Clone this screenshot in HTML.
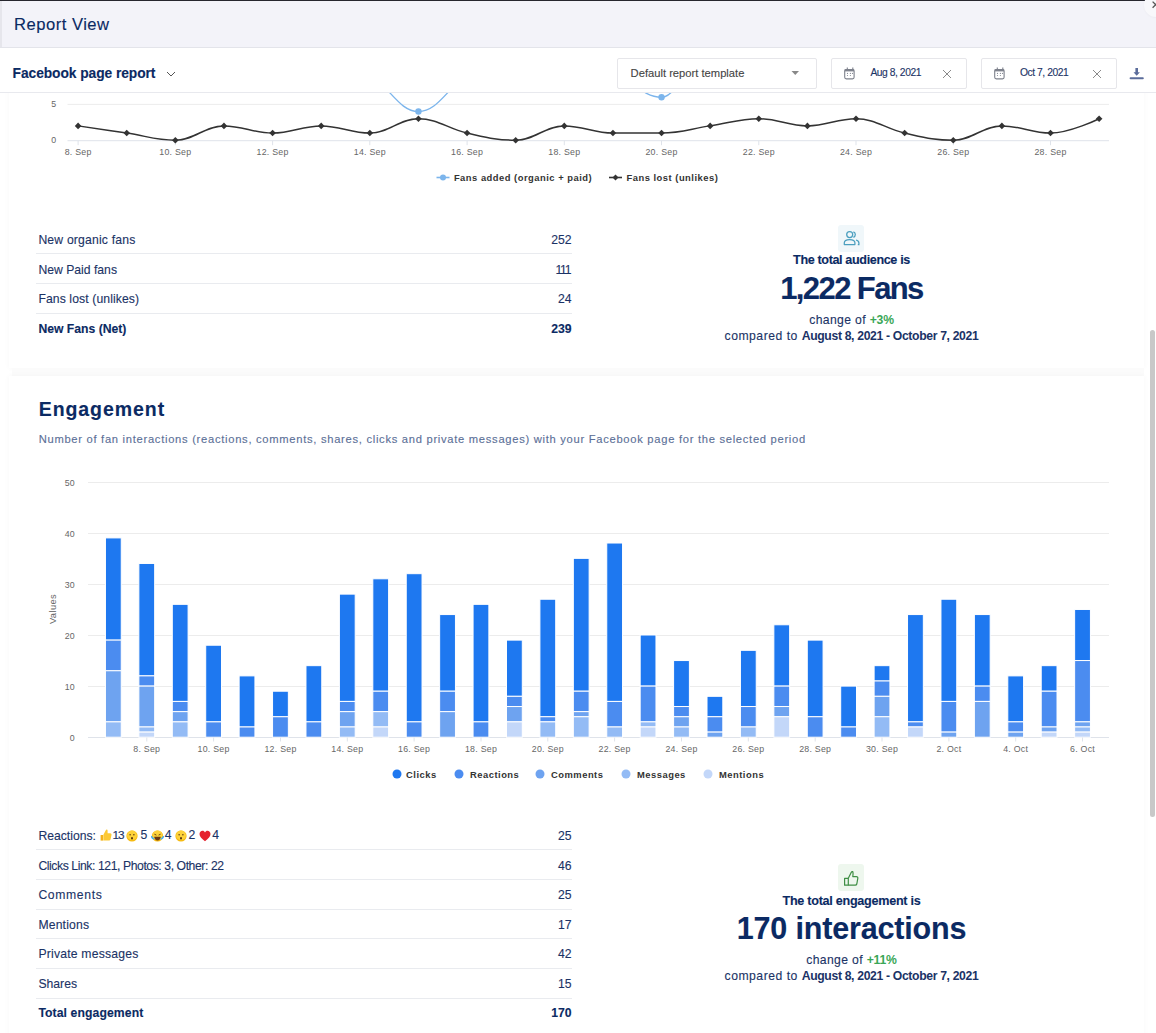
<!DOCTYPE html>
<html><head><meta charset="utf-8">
<style>
html,body{margin:0;padding:0;}
body{width:1156px;height:1033px;overflow:hidden;background:#fff;position:relative;font-family:"Liberation Sans",sans-serif;}
.abs{position:absolute;}
.t{position:absolute;white-space:nowrap;line-height:1;-webkit-text-stroke:0.12px currentColor;}
.t b{-webkit-text-stroke:0;}
svg text{font-family:"Liberation Sans",sans-serif;}
.ax{font-size:8.8px;fill:#666;letter-spacing:0.25px;}
.lg{font-size:9.4px;font-weight:bold;fill:#333;letter-spacing:0.5px;}
.card{position:absolute;background:#fff;box-shadow:0 0 6px rgba(0,0,0,0.035);}
.row{position:absolute;left:36px;width:536px;height:1px;background:#e9ebef;}
</style></head>
<body>
<div class="card" style="left:9px;top:60px;width:1135px;height:308px;"></div>
<div class="abs" style="left:12px;top:368px;width:1132px;height:8px;background:#fbfbfb;"></div>
<div class="card" style="left:9px;top:376px;width:1135px;height:700px;"></div>
<svg class="abs" style="left:0;top:0" width="1156" height="200" viewBox="0 0 1156 200">
<line x1="67.5" x2="1109" y1="104.4" y2="104.4" stroke="#ececec" stroke-width="1"/>
<line x1="67.5" x2="1109" y1="68.6" y2="68.6" stroke="#ececec" stroke-width="1"/>
<line x1="67.5" x2="1109" y1="32.8" y2="32.8" stroke="#ececec" stroke-width="1"/>
<line x1="67.5" x2="1109" y1="140.7" y2="140.7" stroke="#dfe3ea" stroke-width="1"/>
<line x1="78.1" x2="78.1" y1="140.7" y2="145.2" stroke="#dfe3ea"/>
<text x="78.1" y="155.2" text-anchor="middle" class="ax">8. Sep</text>
<line x1="175.3" x2="175.3" y1="140.7" y2="145.2" stroke="#dfe3ea"/>
<text x="175.3" y="155.2" text-anchor="middle" class="ax">10. Sep</text>
<line x1="272.6" x2="272.6" y1="140.7" y2="145.2" stroke="#dfe3ea"/>
<text x="272.6" y="155.2" text-anchor="middle" class="ax">12. Sep</text>
<line x1="369.8" x2="369.8" y1="140.7" y2="145.2" stroke="#dfe3ea"/>
<text x="369.8" y="155.2" text-anchor="middle" class="ax">14. Sep</text>
<line x1="467.1" x2="467.1" y1="140.7" y2="145.2" stroke="#dfe3ea"/>
<text x="467.1" y="155.2" text-anchor="middle" class="ax">16. Sep</text>
<line x1="564.3" x2="564.3" y1="140.7" y2="145.2" stroke="#dfe3ea"/>
<text x="564.3" y="155.2" text-anchor="middle" class="ax">18. Sep</text>
<line x1="661.5" x2="661.5" y1="140.7" y2="145.2" stroke="#dfe3ea"/>
<text x="661.5" y="155.2" text-anchor="middle" class="ax">20. Sep</text>
<line x1="758.8" x2="758.8" y1="140.7" y2="145.2" stroke="#dfe3ea"/>
<text x="758.8" y="155.2" text-anchor="middle" class="ax">22. Sep</text>
<line x1="856.0" x2="856.0" y1="140.7" y2="145.2" stroke="#dfe3ea"/>
<text x="856.0" y="155.2" text-anchor="middle" class="ax">24. Sep</text>
<line x1="953.3" x2="953.3" y1="140.7" y2="145.2" stroke="#dfe3ea"/>
<text x="953.3" y="155.2" text-anchor="middle" class="ax">26. Sep</text>
<line x1="1050.5" x2="1050.5" y1="140.7" y2="145.2" stroke="#dfe3ea"/>
<text x="1050.5" y="155.2" text-anchor="middle" class="ax">28. Sep</text>
<text x="56.5" y="107.0" text-anchor="end" class="ax">5</text>
<text x="56.5" y="142.8" text-anchor="end" class="ax">0</text>
<path d="M78.10 39.96 C78.10 39.96 107.27 49.98 126.72 54.28 C146.17 58.58 155.89 61.44 175.34 61.44 C194.79 61.44 204.51 47.12 223.96 47.12 C243.41 47.12 253.13 51.42 272.58 54.28 C292.03 57.14 301.75 57.14 321.20 61.44 C340.65 65.74 350.37 65.74 369.82 75.76 C389.27 85.78 398.99 111.56 418.44 111.56 C437.89 111.56 447.61 87.22 467.06 75.76 C486.51 64.30 496.23 54.28 515.68 54.28 C535.13 54.28 544.85 57.86 564.30 61.44 C583.75 65.02 593.47 65.02 612.92 72.18 C632.37 79.34 642.09 97.24 661.54 97.24 C680.99 97.24 690.71 39.96 710.16 39.96 C729.61 39.96 739.33 54.28 758.78 54.28 C778.23 54.28 787.95 47.12 807.40 47.12 C826.85 47.12 836.57 61.44 856.02 61.44 C875.47 61.44 885.19 54.28 904.64 54.28 C924.09 54.28 933.81 68.60 953.26 68.60 C972.71 68.60 982.43 64.30 1001.88 61.44 C1021.33 58.58 1031.05 57.14 1050.50 54.28 C1069.95 51.42 1099.12 47.12 1099.12 47.12" fill="none" stroke="#7cb5ec" stroke-width="1.4"/>
<circle cx="78.10" cy="39.96" r="3.2" fill="#7cb5ec"/>
<circle cx="126.72" cy="54.28" r="3.2" fill="#7cb5ec"/>
<circle cx="175.34" cy="61.44" r="3.2" fill="#7cb5ec"/>
<circle cx="223.96" cy="47.12" r="3.2" fill="#7cb5ec"/>
<circle cx="272.58" cy="54.28" r="3.2" fill="#7cb5ec"/>
<circle cx="321.20" cy="61.44" r="3.2" fill="#7cb5ec"/>
<circle cx="369.82" cy="75.76" r="3.2" fill="#7cb5ec"/>
<circle cx="418.44" cy="111.56" r="3.2" fill="#7cb5ec"/>
<circle cx="467.06" cy="75.76" r="3.2" fill="#7cb5ec"/>
<circle cx="515.68" cy="54.28" r="3.2" fill="#7cb5ec"/>
<circle cx="564.30" cy="61.44" r="3.2" fill="#7cb5ec"/>
<circle cx="612.92" cy="72.18" r="3.2" fill="#7cb5ec"/>
<circle cx="661.54" cy="97.24" r="3.2" fill="#7cb5ec"/>
<circle cx="710.16" cy="39.96" r="3.2" fill="#7cb5ec"/>
<circle cx="758.78" cy="54.28" r="3.2" fill="#7cb5ec"/>
<circle cx="807.40" cy="47.12" r="3.2" fill="#7cb5ec"/>
<circle cx="856.02" cy="61.44" r="3.2" fill="#7cb5ec"/>
<circle cx="904.64" cy="54.28" r="3.2" fill="#7cb5ec"/>
<circle cx="953.26" cy="68.60" r="3.2" fill="#7cb5ec"/>
<circle cx="1001.88" cy="61.44" r="3.2" fill="#7cb5ec"/>
<circle cx="1050.50" cy="54.28" r="3.2" fill="#7cb5ec"/>
<circle cx="1099.12" cy="47.12" r="3.2" fill="#7cb5ec"/>
<path d="M78.10 125.88 C78.10 125.88 107.27 130.18 126.72 133.04 C146.17 135.90 155.89 140.20 175.34 140.20 C194.79 140.20 204.51 125.88 223.96 125.88 C243.41 125.88 253.13 133.04 272.58 133.04 C292.03 133.04 301.75 125.88 321.20 125.88 C340.65 125.88 350.37 133.04 369.82 133.04 C389.27 133.04 398.99 118.72 418.44 118.72 C437.89 118.72 447.61 128.74 467.06 133.04 C486.51 137.34 496.23 140.20 515.68 140.20 C535.13 140.20 544.85 125.88 564.30 125.88 C583.75 125.88 593.47 133.04 612.92 133.04 C632.37 133.04 642.09 133.04 661.54 133.04 C680.99 133.04 690.71 128.74 710.16 125.88 C729.61 123.02 739.33 118.72 758.78 118.72 C778.23 118.72 787.95 125.88 807.40 125.88 C826.85 125.88 836.57 118.72 856.02 118.72 C875.47 118.72 885.19 128.74 904.64 133.04 C924.09 137.34 933.81 140.20 953.26 140.20 C972.71 140.20 982.43 125.88 1001.88 125.88 C1021.33 125.88 1031.05 133.04 1050.50 133.04 C1069.95 133.04 1099.12 118.72 1099.12 118.72" fill="none" stroke="#333" stroke-width="1.5"/>
<path d="M78.10 122.58 l3.3 3.3 l-3.3 3.3 l-3.3 -3.3z" fill="#333"/>
<path d="M126.72 129.74 l3.3 3.3 l-3.3 3.3 l-3.3 -3.3z" fill="#333"/>
<path d="M175.34 136.90 l3.3 3.3 l-3.3 3.3 l-3.3 -3.3z" fill="#333"/>
<path d="M223.96 122.58 l3.3 3.3 l-3.3 3.3 l-3.3 -3.3z" fill="#333"/>
<path d="M272.58 129.74 l3.3 3.3 l-3.3 3.3 l-3.3 -3.3z" fill="#333"/>
<path d="M321.20 122.58 l3.3 3.3 l-3.3 3.3 l-3.3 -3.3z" fill="#333"/>
<path d="M369.82 129.74 l3.3 3.3 l-3.3 3.3 l-3.3 -3.3z" fill="#333"/>
<path d="M418.44 115.42 l3.3 3.3 l-3.3 3.3 l-3.3 -3.3z" fill="#333"/>
<path d="M467.06 129.74 l3.3 3.3 l-3.3 3.3 l-3.3 -3.3z" fill="#333"/>
<path d="M515.68 136.90 l3.3 3.3 l-3.3 3.3 l-3.3 -3.3z" fill="#333"/>
<path d="M564.30 122.58 l3.3 3.3 l-3.3 3.3 l-3.3 -3.3z" fill="#333"/>
<path d="M612.92 129.74 l3.3 3.3 l-3.3 3.3 l-3.3 -3.3z" fill="#333"/>
<path d="M661.54 129.74 l3.3 3.3 l-3.3 3.3 l-3.3 -3.3z" fill="#333"/>
<path d="M710.16 122.58 l3.3 3.3 l-3.3 3.3 l-3.3 -3.3z" fill="#333"/>
<path d="M758.78 115.42 l3.3 3.3 l-3.3 3.3 l-3.3 -3.3z" fill="#333"/>
<path d="M807.40 122.58 l3.3 3.3 l-3.3 3.3 l-3.3 -3.3z" fill="#333"/>
<path d="M856.02 115.42 l3.3 3.3 l-3.3 3.3 l-3.3 -3.3z" fill="#333"/>
<path d="M904.64 129.74 l3.3 3.3 l-3.3 3.3 l-3.3 -3.3z" fill="#333"/>
<path d="M953.26 136.90 l3.3 3.3 l-3.3 3.3 l-3.3 -3.3z" fill="#333"/>
<path d="M1001.88 122.58 l3.3 3.3 l-3.3 3.3 l-3.3 -3.3z" fill="#333"/>
<path d="M1050.50 129.74 l3.3 3.3 l-3.3 3.3 l-3.3 -3.3z" fill="#333"/>
<path d="M1099.12 115.42 l3.3 3.3 l-3.3 3.3 l-3.3 -3.3z" fill="#333"/>
<line x1="436.5" x2="449.5" y1="177.5" y2="177.5" stroke="#7cb5ec" stroke-width="1.6"/><circle cx="443" cy="177.5" r="3" fill="#7cb5ec"/>
<text x="453.9" y="180.6" class="lg">Fans added (organic + paid)</text>
<line x1="609" x2="622" y1="177.5" y2="177.5" stroke="#333" stroke-width="1.6"/><path d="M615.5 174.5 l3 3 l-3 3 l-3 -3z" fill="#333"/>
<text x="626.5" y="180.6" class="lg">Fans lost (unlikes)</text>
</svg>
<div class="row" style="top:253px"></div><div class="row" style="top:283px"></div><div class="row" style="top:313px"></div>
<div class="abs" style="left:838px;top:224.5px;width:26px;height:27px;background:#f0f7fa;border-radius:3px;"></div>
<svg class="abs" style="left:835px;top:222px" width="33" height="32" viewBox="0 0 33 32">
  <circle cx="14.7" cy="12.6" r="3.0" fill="none" stroke="#4b9fbf" stroke-width="1.25"/>
  <path d="M18.4 9.8 A3 3 0 0 1 18.4 15.4" fill="none" stroke="#4b9fbf" stroke-width="1.25"/>
  <path d="M9.3 22.6 V20.8 C9.3 18.9 11.4 17.6 14.6 17.6 C17.8 17.6 19.9 18.9 19.9 20.8 V22.6 Z" fill="none" stroke="#4b9fbf" stroke-width="1.25" stroke-linejoin="round"/>
  <path d="M21 18 C22.9 18.5 23.9 19.6 23.9 20.9 V22.6 H22.8" fill="none" stroke="#4b9fbf" stroke-width="1.25"/>
</svg>
<svg class="abs" style="left:0;top:0" width="1156" height="800" viewBox="0 0 1156 800">
<line x1="88" x2="1109" y1="686.5" y2="686.5" stroke="#ececec"/>
<text x="75" y="689.5" text-anchor="end" class="ax">10</text>
<line x1="88" x2="1109" y1="635.5" y2="635.5" stroke="#ececec"/>
<text x="75" y="638.5" text-anchor="end" class="ax">20</text>
<line x1="88" x2="1109" y1="584.5" y2="584.5" stroke="#ececec"/>
<text x="75" y="587.5" text-anchor="end" class="ax">30</text>
<line x1="88" x2="1109" y1="533.5" y2="533.5" stroke="#ececec"/>
<text x="75" y="536.5" text-anchor="end" class="ax">40</text>
<line x1="88" x2="1109" y1="482.5" y2="482.5" stroke="#ececec"/>
<text x="75" y="485.5" text-anchor="end" class="ax">50</text>
<text x="75" y="740.6" text-anchor="end" class="ax">0</text>
<line x1="88" x2="1109" y1="737.5" y2="737.5" stroke="#dfe3ea"/>
<rect x="105.45" y="537.91" width="15.80" height="102.20" fill="#1e78f0" stroke="#fff" stroke-width="1"/>
<rect x="105.45" y="640.11" width="15.80" height="30.66" fill="#4b8cf0" stroke="#fff" stroke-width="1"/>
<rect x="105.45" y="670.77" width="15.80" height="51.10" fill="#6ea3f0" stroke="#fff" stroke-width="1"/>
<rect x="105.45" y="721.87" width="15.80" height="15.33" fill="#93bbf5" stroke="#fff" stroke-width="1"/>
<rect x="138.87" y="563.46" width="15.80" height="112.42" fill="#1e78f0" stroke="#fff" stroke-width="1"/>
<rect x="138.87" y="675.88" width="15.80" height="10.22" fill="#4b8cf0" stroke="#fff" stroke-width="1"/>
<rect x="138.87" y="686.10" width="15.80" height="40.88" fill="#6ea3f0" stroke="#fff" stroke-width="1"/>
<rect x="138.87" y="726.98" width="15.80" height="5.11" fill="#93bbf5" stroke="#fff" stroke-width="1"/>
<rect x="138.87" y="732.09" width="15.80" height="5.11" fill="#c3d7f9" stroke="#fff" stroke-width="1"/>
<rect x="172.29" y="604.34" width="15.80" height="97.09" fill="#1e78f0" stroke="#fff" stroke-width="1"/>
<rect x="172.29" y="701.43" width="15.80" height="10.22" fill="#4b8cf0" stroke="#fff" stroke-width="1"/>
<rect x="172.29" y="711.65" width="15.80" height="10.22" fill="#6ea3f0" stroke="#fff" stroke-width="1"/>
<rect x="172.29" y="721.87" width="15.80" height="15.33" fill="#93bbf5" stroke="#fff" stroke-width="1"/>
<rect x="205.71" y="645.22" width="15.80" height="76.65" fill="#1e78f0" stroke="#fff" stroke-width="1"/>
<rect x="205.71" y="721.87" width="15.80" height="15.33" fill="#4b8cf0" stroke="#fff" stroke-width="1"/>
<rect x="239.13" y="675.88" width="15.80" height="51.10" fill="#1e78f0" stroke="#fff" stroke-width="1"/>
<rect x="239.13" y="726.98" width="15.80" height="10.22" fill="#4b8cf0" stroke="#fff" stroke-width="1"/>
<rect x="272.55" y="691.21" width="15.80" height="25.55" fill="#1e78f0" stroke="#fff" stroke-width="1"/>
<rect x="272.55" y="716.76" width="15.80" height="20.44" fill="#4b8cf0" stroke="#fff" stroke-width="1"/>
<rect x="305.97" y="665.66" width="15.80" height="56.21" fill="#1e78f0" stroke="#fff" stroke-width="1"/>
<rect x="305.97" y="721.87" width="15.80" height="15.33" fill="#4b8cf0" stroke="#fff" stroke-width="1"/>
<rect x="339.39" y="594.12" width="15.80" height="107.31" fill="#1e78f0" stroke="#fff" stroke-width="1"/>
<rect x="339.39" y="701.43" width="15.80" height="10.22" fill="#4b8cf0" stroke="#fff" stroke-width="1"/>
<rect x="339.39" y="711.65" width="15.80" height="15.33" fill="#6ea3f0" stroke="#fff" stroke-width="1"/>
<rect x="339.39" y="726.98" width="15.80" height="10.22" fill="#93bbf5" stroke="#fff" stroke-width="1"/>
<rect x="372.81" y="578.79" width="15.80" height="112.42" fill="#1e78f0" stroke="#fff" stroke-width="1"/>
<rect x="372.81" y="691.21" width="15.80" height="20.44" fill="#4b8cf0" stroke="#fff" stroke-width="1"/>
<rect x="372.81" y="711.65" width="15.80" height="15.33" fill="#93bbf5" stroke="#fff" stroke-width="1"/>
<rect x="372.81" y="726.98" width="15.80" height="10.22" fill="#c3d7f9" stroke="#fff" stroke-width="1"/>
<rect x="406.23" y="573.68" width="15.80" height="148.19" fill="#1e78f0" stroke="#fff" stroke-width="1"/>
<rect x="406.23" y="721.87" width="15.80" height="15.33" fill="#4b8cf0" stroke="#fff" stroke-width="1"/>
<rect x="439.65" y="614.56" width="15.80" height="76.65" fill="#1e78f0" stroke="#fff" stroke-width="1"/>
<rect x="439.65" y="691.21" width="15.80" height="20.44" fill="#4b8cf0" stroke="#fff" stroke-width="1"/>
<rect x="439.65" y="711.65" width="15.80" height="25.55" fill="#6ea3f0" stroke="#fff" stroke-width="1"/>
<rect x="473.07" y="604.34" width="15.80" height="117.53" fill="#1e78f0" stroke="#fff" stroke-width="1"/>
<rect x="473.07" y="721.87" width="15.80" height="15.33" fill="#4b8cf0" stroke="#fff" stroke-width="1"/>
<rect x="506.49" y="640.11" width="15.80" height="56.21" fill="#1e78f0" stroke="#fff" stroke-width="1"/>
<rect x="506.49" y="696.32" width="15.80" height="10.22" fill="#4b8cf0" stroke="#fff" stroke-width="1"/>
<rect x="506.49" y="706.54" width="15.80" height="15.33" fill="#6ea3f0" stroke="#fff" stroke-width="1"/>
<rect x="506.49" y="721.87" width="15.80" height="15.33" fill="#c3d7f9" stroke="#fff" stroke-width="1"/>
<rect x="539.91" y="599.23" width="15.80" height="117.53" fill="#1e78f0" stroke="#fff" stroke-width="1"/>
<rect x="539.91" y="716.76" width="15.80" height="5.11" fill="#4b8cf0" stroke="#fff" stroke-width="1"/>
<rect x="539.91" y="721.87" width="15.80" height="15.33" fill="#93bbf5" stroke="#fff" stroke-width="1"/>
<rect x="573.33" y="558.35" width="15.80" height="132.86" fill="#1e78f0" stroke="#fff" stroke-width="1"/>
<rect x="573.33" y="691.21" width="15.80" height="20.44" fill="#4b8cf0" stroke="#fff" stroke-width="1"/>
<rect x="573.33" y="711.65" width="15.80" height="5.11" fill="#6ea3f0" stroke="#fff" stroke-width="1"/>
<rect x="573.33" y="716.76" width="15.80" height="20.44" fill="#93bbf5" stroke="#fff" stroke-width="1"/>
<rect x="606.75" y="543.02" width="15.80" height="158.41" fill="#1e78f0" stroke="#fff" stroke-width="1"/>
<rect x="606.75" y="701.43" width="15.80" height="25.55" fill="#4b8cf0" stroke="#fff" stroke-width="1"/>
<rect x="606.75" y="726.98" width="15.80" height="10.22" fill="#93bbf5" stroke="#fff" stroke-width="1"/>
<rect x="640.17" y="635.00" width="15.80" height="51.10" fill="#1e78f0" stroke="#fff" stroke-width="1"/>
<rect x="640.17" y="686.10" width="15.80" height="35.77" fill="#4b8cf0" stroke="#fff" stroke-width="1"/>
<rect x="640.17" y="721.87" width="15.80" height="5.11" fill="#93bbf5" stroke="#fff" stroke-width="1"/>
<rect x="640.17" y="726.98" width="15.80" height="10.22" fill="#c3d7f9" stroke="#fff" stroke-width="1"/>
<rect x="673.59" y="660.55" width="15.80" height="45.99" fill="#1e78f0" stroke="#fff" stroke-width="1"/>
<rect x="673.59" y="706.54" width="15.80" height="10.22" fill="#4b8cf0" stroke="#fff" stroke-width="1"/>
<rect x="673.59" y="716.76" width="15.80" height="10.22" fill="#6ea3f0" stroke="#fff" stroke-width="1"/>
<rect x="673.59" y="726.98" width="15.80" height="10.22" fill="#93bbf5" stroke="#fff" stroke-width="1"/>
<rect x="707.01" y="696.32" width="15.80" height="20.44" fill="#1e78f0" stroke="#fff" stroke-width="1"/>
<rect x="707.01" y="716.76" width="15.80" height="15.33" fill="#4b8cf0" stroke="#fff" stroke-width="1"/>
<rect x="707.01" y="732.09" width="15.80" height="5.11" fill="#6ea3f0" stroke="#fff" stroke-width="1"/>
<rect x="740.43" y="650.33" width="15.80" height="56.21" fill="#1e78f0" stroke="#fff" stroke-width="1"/>
<rect x="740.43" y="706.54" width="15.80" height="20.44" fill="#4b8cf0" stroke="#fff" stroke-width="1"/>
<rect x="740.43" y="726.98" width="15.80" height="10.22" fill="#93bbf5" stroke="#fff" stroke-width="1"/>
<rect x="773.85" y="624.78" width="15.80" height="61.32" fill="#1e78f0" stroke="#fff" stroke-width="1"/>
<rect x="773.85" y="686.10" width="15.80" height="20.44" fill="#4b8cf0" stroke="#fff" stroke-width="1"/>
<rect x="773.85" y="706.54" width="15.80" height="10.22" fill="#6ea3f0" stroke="#fff" stroke-width="1"/>
<rect x="773.85" y="716.76" width="15.80" height="20.44" fill="#c3d7f9" stroke="#fff" stroke-width="1"/>
<rect x="807.27" y="640.11" width="15.80" height="76.65" fill="#1e78f0" stroke="#fff" stroke-width="1"/>
<rect x="807.27" y="716.76" width="15.80" height="20.44" fill="#4b8cf0" stroke="#fff" stroke-width="1"/>
<rect x="840.69" y="686.10" width="15.80" height="40.88" fill="#1e78f0" stroke="#fff" stroke-width="1"/>
<rect x="840.69" y="726.98" width="15.80" height="10.22" fill="#4b8cf0" stroke="#fff" stroke-width="1"/>
<rect x="874.11" y="665.66" width="15.80" height="15.33" fill="#1e78f0" stroke="#fff" stroke-width="1"/>
<rect x="874.11" y="680.99" width="15.80" height="15.33" fill="#4b8cf0" stroke="#fff" stroke-width="1"/>
<rect x="874.11" y="696.32" width="15.80" height="20.44" fill="#6ea3f0" stroke="#fff" stroke-width="1"/>
<rect x="874.11" y="716.76" width="15.80" height="20.44" fill="#93bbf5" stroke="#fff" stroke-width="1"/>
<rect x="907.53" y="614.56" width="15.80" height="107.31" fill="#1e78f0" stroke="#fff" stroke-width="1"/>
<rect x="907.53" y="721.87" width="15.80" height="5.11" fill="#4b8cf0" stroke="#fff" stroke-width="1"/>
<rect x="907.53" y="726.98" width="15.80" height="10.22" fill="#c3d7f9" stroke="#fff" stroke-width="1"/>
<rect x="940.95" y="599.23" width="15.80" height="102.20" fill="#1e78f0" stroke="#fff" stroke-width="1"/>
<rect x="940.95" y="701.43" width="15.80" height="30.66" fill="#4b8cf0" stroke="#fff" stroke-width="1"/>
<rect x="940.95" y="732.09" width="15.80" height="5.11" fill="#6ea3f0" stroke="#fff" stroke-width="1"/>
<rect x="974.37" y="614.56" width="15.80" height="71.54" fill="#1e78f0" stroke="#fff" stroke-width="1"/>
<rect x="974.37" y="686.10" width="15.80" height="15.33" fill="#4b8cf0" stroke="#fff" stroke-width="1"/>
<rect x="974.37" y="701.43" width="15.80" height="35.77" fill="#6ea3f0" stroke="#fff" stroke-width="1"/>
<rect x="1007.79" y="675.88" width="15.80" height="45.99" fill="#1e78f0" stroke="#fff" stroke-width="1"/>
<rect x="1007.79" y="721.87" width="15.80" height="10.22" fill="#4b8cf0" stroke="#fff" stroke-width="1"/>
<rect x="1007.79" y="732.09" width="15.80" height="5.11" fill="#6ea3f0" stroke="#fff" stroke-width="1"/>
<rect x="1041.21" y="665.66" width="15.80" height="25.55" fill="#1e78f0" stroke="#fff" stroke-width="1"/>
<rect x="1041.21" y="691.21" width="15.80" height="35.77" fill="#4b8cf0" stroke="#fff" stroke-width="1"/>
<rect x="1041.21" y="726.98" width="15.80" height="5.11" fill="#6ea3f0" stroke="#fff" stroke-width="1"/>
<rect x="1041.21" y="732.09" width="15.80" height="5.11" fill="#c3d7f9" stroke="#fff" stroke-width="1"/>
<rect x="1074.63" y="609.45" width="15.80" height="51.10" fill="#1e78f0" stroke="#fff" stroke-width="1"/>
<rect x="1074.63" y="660.55" width="15.80" height="61.32" fill="#4b8cf0" stroke="#fff" stroke-width="1"/>
<rect x="1074.63" y="721.87" width="15.80" height="5.11" fill="#6ea3f0" stroke="#fff" stroke-width="1"/>
<rect x="1074.63" y="726.98" width="15.80" height="5.11" fill="#93bbf5" stroke="#fff" stroke-width="1"/>
<rect x="1074.63" y="732.09" width="15.80" height="5.11" fill="#c3d7f9" stroke="#fff" stroke-width="1"/>
<line x1="146.8" x2="146.8" y1="737.5" y2="741.5" stroke="#dfe3ea"/>
<text x="146.8" y="751.7" text-anchor="middle" class="ax">8. Sep</text>
<line x1="213.6" x2="213.6" y1="737.5" y2="741.5" stroke="#dfe3ea"/>
<text x="213.6" y="751.7" text-anchor="middle" class="ax">10. Sep</text>
<line x1="280.5" x2="280.5" y1="737.5" y2="741.5" stroke="#dfe3ea"/>
<text x="280.5" y="751.7" text-anchor="middle" class="ax">12. Sep</text>
<line x1="347.3" x2="347.3" y1="737.5" y2="741.5" stroke="#dfe3ea"/>
<text x="347.3" y="751.7" text-anchor="middle" class="ax">14. Sep</text>
<line x1="414.1" x2="414.1" y1="737.5" y2="741.5" stroke="#dfe3ea"/>
<text x="414.1" y="751.7" text-anchor="middle" class="ax">16. Sep</text>
<line x1="481.0" x2="481.0" y1="737.5" y2="741.5" stroke="#dfe3ea"/>
<text x="481.0" y="751.7" text-anchor="middle" class="ax">18. Sep</text>
<line x1="547.8" x2="547.8" y1="737.5" y2="741.5" stroke="#dfe3ea"/>
<text x="547.8" y="751.7" text-anchor="middle" class="ax">20. Sep</text>
<line x1="614.6" x2="614.6" y1="737.5" y2="741.5" stroke="#dfe3ea"/>
<text x="614.6" y="751.7" text-anchor="middle" class="ax">22. Sep</text>
<line x1="681.5" x2="681.5" y1="737.5" y2="741.5" stroke="#dfe3ea"/>
<text x="681.5" y="751.7" text-anchor="middle" class="ax">24. Sep</text>
<line x1="748.3" x2="748.3" y1="737.5" y2="741.5" stroke="#dfe3ea"/>
<text x="748.3" y="751.7" text-anchor="middle" class="ax">26. Sep</text>
<line x1="815.2" x2="815.2" y1="737.5" y2="741.5" stroke="#dfe3ea"/>
<text x="815.2" y="751.7" text-anchor="middle" class="ax">28. Sep</text>
<line x1="882.0" x2="882.0" y1="737.5" y2="741.5" stroke="#dfe3ea"/>
<text x="882.0" y="751.7" text-anchor="middle" class="ax">30. Sep</text>
<line x1="948.9" x2="948.9" y1="737.5" y2="741.5" stroke="#dfe3ea"/>
<text x="948.9" y="751.7" text-anchor="middle" class="ax">2. Oct</text>
<line x1="1015.7" x2="1015.7" y1="737.5" y2="741.5" stroke="#dfe3ea"/>
<text x="1015.7" y="751.7" text-anchor="middle" class="ax">4. Oct</text>
<line x1="1082.5" x2="1082.5" y1="737.5" y2="741.5" stroke="#dfe3ea"/>
<text x="1082.5" y="751.7" text-anchor="middle" class="ax">6. Oct</text>
<text x="0" y="0" transform="translate(56.3,609) rotate(-90)" text-anchor="middle" class="ax" style="font-size:9.3px;letter-spacing:0.4px">Values</text>
<circle cx="397" cy="774" r="4.5" fill="#1e78f0"/>
<text x="406" y="778.0" class="lg">Clicks</text>
<circle cx="459" cy="774" r="4.5" fill="#4b8cf0"/>
<text x="470" y="778.0" class="lg">Reactions</text>
<circle cx="540" cy="774" r="4.5" fill="#6ea3f0"/>
<text x="551" y="778.0" class="lg">Comments</text>
<circle cx="626" cy="774" r="4.5" fill="#93bbf5"/>
<text x="637" y="778.0" class="lg">Messages</text>
<circle cx="708" cy="774" r="4.5" fill="#c3d7f9"/>
<text x="719" y="778.0" class="lg">Mentions</text>
</svg>
<div class="row" style="top:849px"></div><div class="row" style="top:879px"></div><div class="row" style="top:909px"></div><div class="row" style="top:938px"></div><div class="row" style="top:968px"></div><div class="row" style="top:998px"></div>
<svg class="abs" style="left:99.5px;top:829px" width="12" height="12" viewBox="0 0 12 12"><path d="M0.6 6 h2.6 v5.6 h-2.6z" fill="#f2b21c"/><path d="M3.4 5.8 l2.4-4.6 c0.5-1 1.8-0.7 1.8 0.5 v2.6 h2.6 c0.9 0 1.5 0.8 1.3 1.6 l-1 4.6 c-0.2 0.7-0.7 1.1-1.4 1.1 h-5.7z" fill="#fcc934"/></svg><svg class="abs" style="left:126.4px;top:829.5px" width="12" height="12" viewBox="0 0 12 12"><circle cx="6" cy="6" r="5.6" fill="#f6b90e"/><circle cx="6" cy="5.4" r="4.9" fill="#fdd23b"/><circle cx="4.1" cy="4.8" r="0.75" fill="#5b3a10"/><circle cx="7.9" cy="4.8" r="0.75" fill="#5b3a10"/><ellipse cx="6" cy="8.3" rx="1" ry="1.3" fill="#5b3a10"/></svg><svg class="abs" style="left:175.2px;top:829.5px" width="12" height="12" viewBox="0 0 12 12"><circle cx="6" cy="6" r="5.6" fill="#f6b90e"/><circle cx="6" cy="5.4" r="4.9" fill="#fdd23b"/><circle cx="4.1" cy="4.8" r="0.75" fill="#5b3a10"/><circle cx="7.9" cy="4.8" r="0.75" fill="#5b3a10"/><ellipse cx="6" cy="8.3" rx="1" ry="1.3" fill="#5b3a10"/></svg><svg class="abs" style="left:150.8px;top:829.5px" width="13" height="12" viewBox="0 0 13 12"><circle cx="6.5" cy="6" r="5.6" fill="#f6b90e"/><circle cx="6.5" cy="5.4" r="4.9" fill="#fdd23b"/><path d="M3.4 4.2 l2 0.9 M9.6 4.2 l-2 0.9" stroke="#5b3a10" stroke-width="0.9"/><path d="M3.2 6.8 h6.6 c-0.3 2.4-1.6 3.7-3.3 3.7 s-3-1.3-3.3-3.7z" fill="#6b3a12"/><path d="M0.6 6.6 c0.5 1.4 1.3 2 2.3 2.1 M12.4 6.6 c-0.5 1.4-1.3 2-2.3 2.1" stroke="#4fb3ee" stroke-width="1.5" stroke-linecap="round"/></svg><svg class="abs" style="left:199px;top:829.5px" width="12" height="12" viewBox="0 0 12 12"><path d="M6 11.2 C2.4 8.5 0.5 6.5 0.5 4 C0.5 2.1 1.9 0.8 3.5 0.8 C4.6 0.8 5.5 1.4 6 2.4 C6.5 1.4 7.4 0.8 8.5 0.8 C10.1 0.8 11.5 2.1 11.5 4 C11.5 6.5 9.6 8.5 6 11.2z" fill="#e5222e"/></svg>
<div class="abs" style="left:838px;top:864px;width:26px;height:27px;background:#eef7ee;border-radius:3px;"></div>
<svg class="abs" style="left:835px;top:861px" width="33" height="33" viewBox="0 0 33 33">
  <path d="M9.6 17.3 H13.3 V24.2 H9.6 Z" fill="none" stroke="#3f8f45" stroke-width="1.2" stroke-linejoin="round"/>
  <path d="M13.3 17.3 L16.2 11.6 C16.6 10.6 17.6 10.1 17.9 11 C18.3 12.2 18 14 17.8 15.6 H21.4 C22.4 15.6 23 16.5 22.8 17.4 L21.8 23 C21.6 23.8 21 24.2 20.2 24.2 H13.3" fill="none" stroke="#3f8f45" stroke-width="1.2" stroke-linejoin="round"/>
</svg>
<div class="t" id="f0l" style="top:234.27px;font-size:12.20px;font-weight:normal;color:#1b3366;letter-spacing:0.180px;left:38.40px;">New organic fans</div>
<div class="t" id="f0v" style="top:234.27px;font-size:12.20px;font-weight:normal;color:#1b3366;letter-spacing:0.000px;right:584.50px;">252</div>
<div class="t" id="f1l" style="top:264.27px;font-size:12.20px;font-weight:normal;color:#1b3366;letter-spacing:0.000px;left:38.40px;">New Paid fans</div>
<div class="t" id="f1v" style="top:264.27px;font-size:12.20px;font-weight:normal;color:#1b3366;letter-spacing:-1.200px;right:585.70px;">111</div>
<div class="t" id="f2l" style="top:293.47px;font-size:12.20px;font-weight:normal;color:#1b3366;letter-spacing:0.100px;left:38.40px;">Fans lost (unlikes)</div>
<div class="t" id="f2v" style="top:293.47px;font-size:12.20px;font-weight:normal;color:#1b3366;letter-spacing:0.000px;right:584.50px;">24</div>
<div class="t" id="f3l" style="top:323.27px;font-size:12.20px;font-weight:bold;color:#0b2a63;letter-spacing:0.000px;left:38.40px;">New Fans (Net)</div>
<div class="t" id="f3v" style="top:323.27px;font-size:12.20px;font-weight:bold;color:#0b2a63;letter-spacing:0.000px;right:584.50px;">239</div>
<div class="t" id="ta" style="top:254.33px;font-size:12.60px;font-weight:bold;color:#0b2a63;letter-spacing:-0.370px;left:351.50px;width:1000px;text-align:center;">The total audience is</div>
<div class="t" id="fans" style="top:273.06px;font-size:31.00px;font-weight:bold;color:#0b2a63;letter-spacing:-1.600px;left:351.50px;width:1000px;text-align:center;">1,222 Fans</div>
<div class="t" id="ch1" style="top:314.17px;font-size:12.20px;font-weight:normal;color:#1b3366;letter-spacing:0.000px;left:351.50px;width:1000px;text-align:center;"><span style="letter-spacing:0.35px">change of </span><b style="color:#3aa757;letter-spacing:-0.2px">+3%</b></div>
<div class="t" id="cmp1" style="top:329.57px;font-size:12.20px;font-weight:normal;color:#1b3366;letter-spacing:0.000px;left:351.50px;width:1000px;text-align:center;"><span style="letter-spacing:0.5px">compared to </span><b style="letter-spacing:-0.34px">August 8, 2021 - October 7, 2021</b></div>
<div class="t" id="eng" style="top:400.39px;font-size:19.50px;font-weight:bold;color:#0b2a63;letter-spacing:0.940px;left:38.70px;">Engagement</div>
<div class="t" id="sub" style="top:433.62px;font-size:11.20px;font-weight:normal;color:#5b6f97;letter-spacing:0.710px;left:38.70px;">Number of fan interactions (reactions, comments, shares, clicks and private messages) with your Facebook page for the selected period</div>
<div class="t" id="e0l" style="top:830.17px;font-size:12.20px;font-weight:normal;color:#1b3366;letter-spacing:0.000px;left:38.40px;">Reactions:</div>
<div class="t" id="e0v" style="top:830.17px;font-size:12.20px;font-weight:normal;color:#1b3366;letter-spacing:0.000px;right:584.50px;">25</div>
<div class="t" id="e1l" style="top:860.07px;font-size:12.20px;font-weight:normal;color:#1b3366;letter-spacing:-0.420px;left:38.40px;">Clicks Link: 121, Photos: 3, Other: 22</div>
<div class="t" id="e1v" style="top:860.07px;font-size:12.20px;font-weight:normal;color:#1b3366;letter-spacing:0.000px;right:584.50px;">46</div>
<div class="t" id="e2l" style="top:889.07px;font-size:12.20px;font-weight:normal;color:#1b3366;letter-spacing:0.640px;left:38.40px;">Comments</div>
<div class="t" id="e2v" style="top:889.07px;font-size:12.20px;font-weight:normal;color:#1b3366;letter-spacing:0.000px;right:584.50px;">25</div>
<div class="t" id="e3l" style="top:918.77px;font-size:12.20px;font-weight:normal;color:#1b3366;letter-spacing:0.170px;left:38.40px;">Mentions</div>
<div class="t" id="e3v" style="top:918.77px;font-size:12.20px;font-weight:normal;color:#1b3366;letter-spacing:0.000px;right:584.50px;">17</div>
<div class="t" id="e4l" style="top:948.27px;font-size:12.20px;font-weight:normal;color:#1b3366;letter-spacing:0.200px;left:38.40px;">Private messages</div>
<div class="t" id="e4v" style="top:948.27px;font-size:12.20px;font-weight:normal;color:#1b3366;letter-spacing:0.000px;right:584.50px;">42</div>
<div class="t" id="e5l" style="top:977.77px;font-size:12.20px;font-weight:normal;color:#1b3366;letter-spacing:0.000px;left:38.40px;">Shares</div>
<div class="t" id="e5v" style="top:977.77px;font-size:12.20px;font-weight:normal;color:#1b3366;letter-spacing:0.000px;right:584.50px;">15</div>
<div class="t" id="e6l" style="top:1007.47px;font-size:12.20px;font-weight:bold;color:#0b2a63;letter-spacing:0.100px;left:38.40px;">Total engagement</div>
<div class="t" id="e6v" style="top:1007.47px;font-size:12.20px;font-weight:bold;color:#0b2a63;letter-spacing:0.000px;right:584.50px;">170</div>
<div class="t" id="n13" style="top:829.81px;font-size:11.80px;font-weight:normal;color:#1b3366;letter-spacing:-1.100px;left:112.60px;">13</div>
<div class="t" id="n5" style="top:829.47px;font-size:12.20px;font-weight:normal;color:#1b3366;letter-spacing:0.000px;left:140.60px;">5</div>
<div class="t" id="n4a" style="top:829.47px;font-size:12.20px;font-weight:normal;color:#1b3366;letter-spacing:0.000px;left:164.80px;">4</div>
<div class="t" id="n2" style="top:829.47px;font-size:12.20px;font-weight:normal;color:#1b3366;letter-spacing:0.000px;left:188.60px;">2</div>
<div class="t" id="n4b" style="top:829.47px;font-size:12.20px;font-weight:normal;color:#1b3366;letter-spacing:0.000px;left:212.20px;">4</div>
<div class="t" id="te" style="top:894.73px;font-size:12.60px;font-weight:bold;color:#0b2a63;letter-spacing:-0.270px;left:351.50px;width:1000px;text-align:center;">The total engagement is</div>
<div class="t" id="i170" style="top:913.28px;font-size:30.50px;font-weight:bold;color:#0b2a63;letter-spacing:-0.170px;left:351.50px;width:1000px;text-align:center;">170 interactions</div>
<div class="t" id="ch2" style="top:953.97px;font-size:12.20px;font-weight:normal;color:#1b3366;letter-spacing:0.000px;left:351.50px;width:1000px;text-align:center;"><span style="letter-spacing:0.35px">change of </span><b style="color:#3aa757;letter-spacing:-0.2px">+11%</b></div>
<div class="t" id="cmp2" style="top:969.57px;font-size:12.20px;font-weight:normal;color:#1b3366;letter-spacing:0.000px;left:351.50px;width:1000px;text-align:center;"><span style="letter-spacing:0.5px">compared to </span><b style="letter-spacing:-0.34px">August 8, 2021 - October 7, 2021</b></div>
<!-- header overlay -->
<div class="abs" style="left:0;top:0;width:1156px;height:92px;background:#fff;border-bottom:1px solid #e8e9ee;"></div>
<div class="abs" style="left:0;top:0;width:1156px;height:47px;background:#f3f3f9;border-bottom:1px solid #e3e4ea;"></div>
<div class="abs" style="left:0;top:0;width:1148px;height:1px;background:#26262e;"></div>
<div class="abs" style="left:0;top:1px;width:2px;height:46px;background:#e6e6ec;"></div>
<div class="abs" style="left:1144px;top:-7px;width:24px;height:24px;border-radius:50%;background:#f8f8fb;box-shadow:0 1px 2px rgba(0,0,0,0.03)"></div>
<svg class="abs" style="left:1150px;top:0" width="6" height="10" viewBox="0 0 6 10"><path d="M2.6 1.6 L8 7 M2.6 7.8 L8 2.4" stroke="#555" stroke-width="1.3"/></svg>
<svg class="abs" style="left:166px;top:70px" width="10" height="8" viewBox="0 0 10 8"><path d="M1 2 l4 4 l4 -4" fill="none" stroke="#555" stroke-width="1"/></svg>
<div class="abs" style="left:617px;top:58px;width:198px;height:29px;border:1px solid #e6e6ea;border-radius:2px;"></div>
<svg class="abs" style="left:791px;top:70px" width="9" height="6" viewBox="0 0 9 6"><path d="M0.5 1 h7.5 l-3.75 4z" fill="#888"/></svg>
<div class="abs" style="left:831px;top:58px;width:134px;height:29px;border:1px solid #e6e6ea;border-radius:2px;"></div>
<svg class="abs" style="left:843px;top:66px" width="14" height="15" viewBox="0 0 14 15"><rect x="1.7" y="3.5" width="9.4" height="9.4" rx="1.6" fill="none" stroke="#7d818c" stroke-width="1.1"/><rect x="1.7" y="3.2" width="9.4" height="2.2" fill="#7d818c"/><path d="M4.3 1.6 v2 M9.8 1.6 v2" stroke="#7d818c" stroke-width="1.1"/><g fill="#8a8e98"><circle cx="4.5" cy="7.4" r="0.6"/><circle cx="7.4" cy="7.4" r="0.6"/><circle cx="9.5" cy="7.4" r="0.6"/><circle cx="4.5" cy="9.5" r="0.6"/><circle cx="7.4" cy="9.5" r="0.6"/></g></svg>
<svg class="abs" style="left:942px;top:69px" width="10" height="10" viewBox="0 0 10 10"><path d="M1 1 L9 9 M9 1 L1 9" stroke="#8a8a8a" stroke-width="1"/></svg>
<div class="abs" style="left:981px;top:58px;width:134px;height:29px;border:1px solid #e6e6ea;border-radius:2px;"></div>
<svg class="abs" style="left:993px;top:66px" width="14" height="15" viewBox="0 0 14 15"><rect x="1.7" y="3.5" width="9.4" height="9.4" rx="1.6" fill="none" stroke="#7d818c" stroke-width="1.1"/><rect x="1.7" y="3.2" width="9.4" height="2.2" fill="#7d818c"/><path d="M4.3 1.6 v2 M9.8 1.6 v2" stroke="#7d818c" stroke-width="1.1"/><g fill="#8a8e98"><circle cx="4.5" cy="7.4" r="0.6"/><circle cx="7.4" cy="7.4" r="0.6"/><circle cx="9.5" cy="7.4" r="0.6"/><circle cx="4.5" cy="9.5" r="0.6"/><circle cx="7.4" cy="9.5" r="0.6"/></g></svg>
<svg class="abs" style="left:1092px;top:69px" width="10" height="10" viewBox="0 0 10 10"><path d="M1 1 L9 9 M9 1 L1 9" stroke="#8a8a8a" stroke-width="1"/></svg>
<svg class="abs" style="left:1126px;top:64px" width="20" height="18" viewBox="0 0 20 18"><path d="M9.4 3.9 h2.6 v4.3 h1.9 l-3.2 3.5 l-3.2 -3.5 h1.9z" fill="#5b6c9b"/><rect x="3.6" y="13.3" width="14.2" height="1.9" rx="0.95" fill="#5b6c9b"/></svg>
<div class="t" id="rv" style="top:16.95px;font-size:16.60px;font-weight:normal;color:#0b2a63;letter-spacing:0.500px;left:14.00px;">Report View</div>
<div class="t" id="fb" style="top:66.72px;font-size:13.80px;font-weight:bold;color:#0b2a63;letter-spacing:-0.070px;left:12.60px;">Facebook page report</div>
<div class="t" id="dt" style="top:67.82px;font-size:11.20px;font-weight:normal;color:#454545;letter-spacing:0.000px;left:630.60px;">Default report template</div>
<div class="t" id="d1" style="top:68.38px;font-size:10.30px;font-weight:normal;color:#1b3366;letter-spacing:-0.450px;left:870.40px;">Aug 8, 2021</div>
<div class="t" id="d2" style="top:68.38px;font-size:10.30px;font-weight:normal;color:#1b3366;letter-spacing:-0.450px;left:1020.00px;">Oct 7, 2021</div>
<div class="abs" style="left:1150px;top:330px;width:5px;height:487px;background:#c8c8c8;border-radius:3px;"></div>
</body></html>
